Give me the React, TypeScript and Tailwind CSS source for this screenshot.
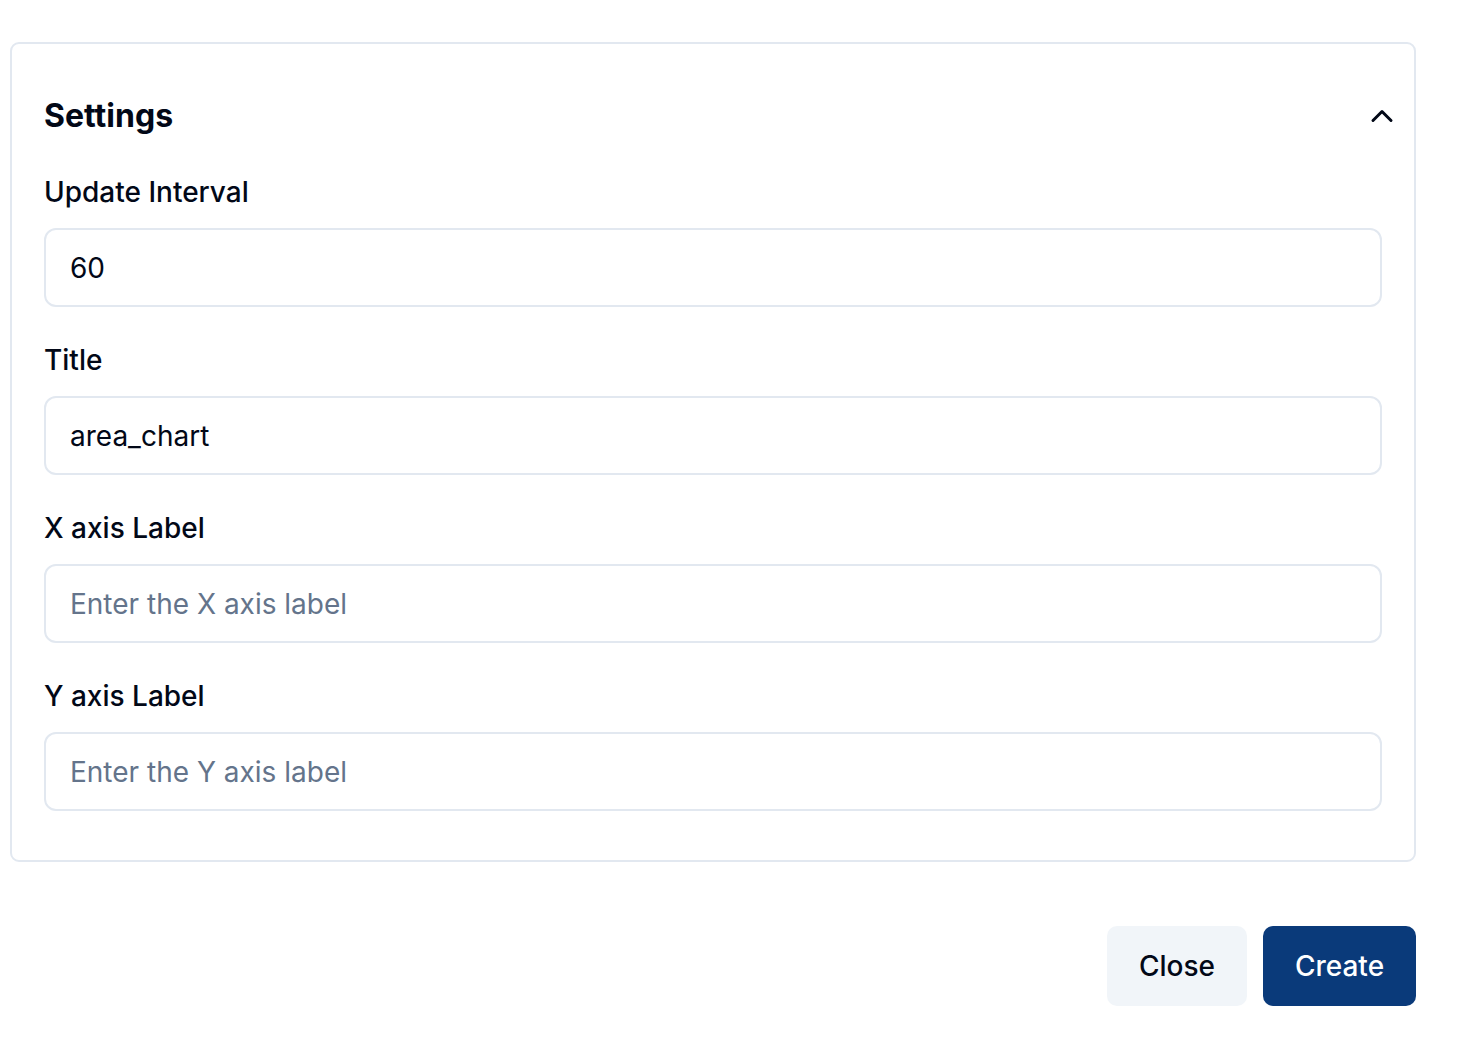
import { ChevronUp } from "lucide-react";

interface FieldProps {
  label: string;
  value?: string;
  placeholder?: string;
}

const Field = ({ label, value, placeholder }: FieldProps) => {
  return (
    <div className="flex flex-col gap-[18px]">
      <label className="text-[28px] leading-[36px] font-medium text-[#020817]">
        {label}
      </label>
      <input
        defaultValue={value}
        placeholder={placeholder}
        className="h-[79px] w-full rounded-[12px] border-2 border-[#e2e8f0] bg-white px-[24px] text-[28px] text-[#020817] placeholder:text-[#64748b] outline-none"
      />
    </div>
  );
};

const App = () => {
  return (
    <div
      className="min-h-screen w-full bg-white pt-[42px] pl-[10px] pr-[42px]"
      style={{ fontFamily: "Inter, 'Noto Sans', sans-serif" }}
    >
      <div className="w-[1406px] rounded-[9px] border-2 border-[#e2e8f0] px-[32px] pt-[52px] pb-[49px]">
        <div className="flex h-[40px] items-center justify-between">
          <h2 className="text-[32px] font-bold text-[#020817]">Settings</h2>
          <ChevronUp className="mr-[-18px] h-[36px] w-[36px] text-[#020817]" strokeWidth={2} />
        </div>
        <div className="mt-[38px] flex flex-col gap-[35px]">
          <Field label="Update Interval" value="60" />
          <Field label="Title" value="area_chart" />
          <Field label="X axis Label" placeholder="Enter the X axis label" />
          <Field label="Y axis Label" placeholder="Enter the Y axis label" />
        </div>
      </div>
      <div className="mt-[64px] flex w-[1406px] justify-end gap-[16px]">
        <button className="h-[80px] w-[140px] rounded-[10px] bg-[#f1f5f9] text-[28px] font-medium text-[#020817]">
          Close
        </button>
        <button className="h-[80px] w-[153px] rounded-[10px] bg-[#0a3a7a] text-[28px] font-medium text-white">
          Create
        </button>
      </div>
    </div>
  );
};

export default App;
